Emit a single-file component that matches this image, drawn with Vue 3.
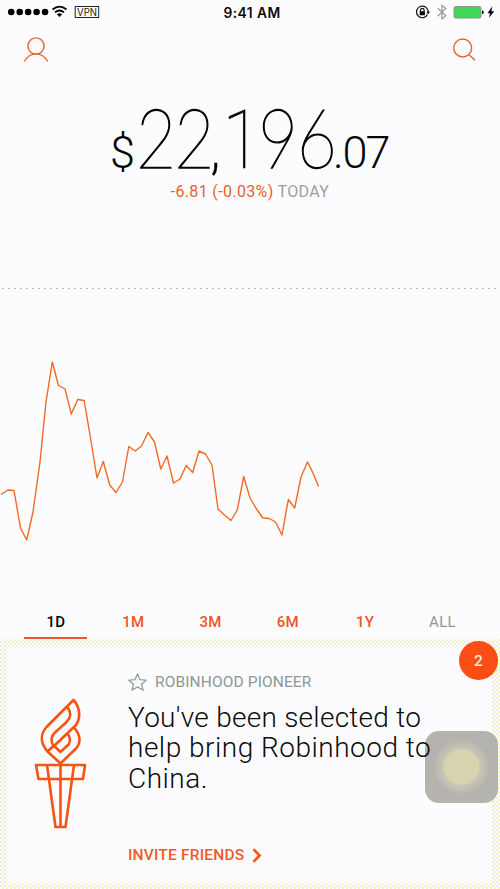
<script setup>
const ranges = ['1D', '1M', '3M', '6M', '1Y', 'ALL']
const points = [
  [1, 494.5], [8, 490], [14, 490.5], [20.5, 528], [26.7, 540], [33, 512], [40, 462], [46, 402],
  [52.3, 362], [58.5, 385.5], [65, 389], [71.3, 414], [77.7, 399.5], [84.2, 400.5], [90.5, 438], [97, 478],
  [103.3, 461.5], [109.7, 485], [116, 492.5], [122.5, 482], [128.8, 446.5], [135.2, 451], [141.5, 446],
  [148, 432.5], [154.5, 442], [160.8, 469], [167, 456], [173.5, 483], [180, 479], [186.2, 465.5],
  [192.7, 472.5], [199, 451], [205.5, 454], [212, 465], [218, 509], [224.5, 515], [231, 520.5],
  [237.3, 510], [243.7, 476.5], [250, 498], [256.5, 509], [262.8, 518], [269.3, 518.5], [275.5, 522],
  [282, 535], [288.3, 499.5], [294.7, 508], [301, 477], [307.5, 462], [313, 473], [318.5, 486.5],
]
const line = points.map((p) => p.join(',')).join(' ')
</script>

<template>
  <main class="screen">
    <div class="status">
      <div class="side">
        <svg width="104" height="25" viewBox="0 0 104 25">
          <circle v-for="n in 5" :key="n" :cx="2.8 + n * 8.45" cy="12" r="3.3" />
          <g fill="none" stroke="#000" stroke-width="1.8">
            <path d="M52.5 9.5Q59.5 3.8 66.5 9.5" />
            <path d="M55 12.4Q59.5 8.6 64 12.4" />
          </g>
          <path d="M56.8 14.2Q59.5 12.2 62.2 14.2L59.5 17z" />
          <rect x="75.2" y="6.5" width="23.5" height="11" fill="none" stroke="#222" stroke-width="1" />
          <text x="77" y="15.7" class="vpn" textLength="20" lengthAdjust="spacingAndGlyphs">VPN</text>
        </svg>
      </div>
      <div class="clock">9:41 AM</div>
      <div class="side end">
        <svg width="88" height="25" viewBox="412 0 88 25">
          <g fill="none" stroke="#111" stroke-width="1.2">
            <path d="M427.3 9A5.8 5.8 0 1 0 427.5 14.5" />
            <path d="M427.3 9Q428.4 10.5 428.4 12.4" />
            <path d="M420.5 11.5v-1.3a1.8 1.8 0 0 1 3.6 0v1.3" />
          </g>
          <path d="M426.3 11.7h3.6l-1.8 2.6zM419.7 11.2h5.2v4h-5.2z" />
          <path d="M437.7 8.2L445.8 15.8L441.9 19V5.3L445.8 8.5L437.7 16.2" fill="none" stroke="#9a9898" stroke-width="1.2" />
          <rect x="454" y="6.5" width="27" height="11.6" rx="1.6" fill="#43d75a" stroke="#8e9b85" stroke-width="1" />
          <path d="M482 10.3q1.8.3 1.8 2t-1.8 2z" />
          <path d="M492.3 6.3L487.5 13.2H490.1L489 17.8L494.2 11.2H491.4z" />
        </svg>
      </div>
    </div>

    <nav class="actions">
      <svg width="26" height="26" viewBox="23 36 26 26" class="stroke">
        <circle cx="36" cy="46" r="8.1" />
        <path d="M24.3 61.5C27.5 56.3 31.2 53.9 36 53.9S44.6 56.3 47.8 61.5" />
      </svg>
      <svg width="24" height="26" viewBox="452 36 24 26" class="stroke">
        <circle cx="462.7" cy="48" r="9" />
        <path d="M468.8 54.5L475 60.2" />
      </svg>
    </nav>

    <section class="value">
      <svg width="300" height="78" viewBox="100 102 300 78" class="price">
        <text x="110" y="168" class="cents" textLength="25" lengthAdjust="spacingAndGlyphs">$</text>
        <g transform="scale(.85 1)" class="big">
          <text y="168"><tspan x="160 205">22</tspan><tspan x="248" class="comma">,</tspan><tspan x="262" class="one">1</tspan><tspan x="303.5 349">96</tspan></text>
        </g>
        <text y="168" x="333 342.5 365.5" class="cents">.07</text>
      </svg>
      <p class="change"><b>-6.81 (-0.03%)</b> TODAY</p>
    </section>

    <section class="chart">
      <svg width="500" height="310" viewBox="0 280 500 310">
        <path d="M2 288.5H500" stroke="#aaa58c" stroke-width="1.2" stroke-dasharray="1.5 4.5" />
        <polyline :points="line" fill="none" stroke="#ef6a24" stroke-width="1.4" stroke-linejoin="round" />
      </svg>
    </section>

    <div class="tabs">
      <div v-for="(r, i) in ranges" :key="r" class="tab" :class="{ active: i === 0, muted: r === 'ALL' }">{{ r }}</div>
    </div>

    <section class="tray">
      <article class="card">
        <svg class="torch" width="54" height="132" viewBox="34 698 54 132">
          <path d="M60.5 763.5L47.5 751.5C41 744 39.5 735 46.5 727L73.5 700C80 707 81 718 76 725L53.5 746.5" />
          <path d="M67.5 707C71.5 713 71 718 66.5 722L54.5 733C51 736.5 51 741 53 745L60.5 752L68.5 744.5C71 741 70 737 67.5 733.5" />
          <path d="M47.5 751.5L54 745.5M73.5 727.5C80 733 81.5 742 76.5 748L60.5 763.5" />
          <path d="M36 765H85L83 779H38.5zM47 765L55.5 827H65.5L74 765M60.5 763V827" />
        </svg>
        <div class="body">
          <div class="label">
            <svg width="19" height="18" viewBox="0 0 19 18"><path d="M9.5 1L12 6.7L18.2 7.2L13.5 11.3L15 17L9.5 14L4 17L5.5 11.3L.8 7.2L7 6.7z" /></svg>
            <span>ROBINHOOD PIONEER</span>
          </div>
          <h2><span class="l1">You've been selected to</span><br><span class="l2">help bring Robinhood to</span><br><span class="l3">China.</span></h2>
          <div class="invite">
            <span>INVITE FRIENDS</span>
            <svg width="10" height="15" viewBox="0 0 10 15"><path d="M1.5 1.2L7.6 7.5L1.5 13.8" /></svg>
          </div>
        </div>
      </article>
      <div class="badge">2</div>
      <div class="assist"></div>
    </section>
  </main>
</template>

<style>
body { background: #fcfcfe; overflow: hidden; }
</style>

<style scoped>
.screen { width: 500px; height: 889px; overflow: hidden; background: #fcfcfe; font-family: Roboto, sans-serif; color: #0b0b0b; display: flex; flex-direction: column; }
svg { display: block; flex: none; }
.status { height: 25px; display: flex; align-items: center; }
.side { flex: 1; display: flex; }
.end { justify-content: flex-end; }
.clock { width: 66px; text-align: center; font: 600 13.8px/24px Inter, sans-serif; white-space: nowrap; letter-spacing: .45px; padding-left: 4px; }
.vpn { font: 10px Inter, sans-serif; fill: #222; }
.actions { height: 26px; padding: 11px 24px 0 23px; display: flex; justify-content: space-between; }
.stroke { fill: none; stroke: #ed5f30; stroke-width: 1.4; }
.value { height: 178px; padding-top: 40px; box-sizing: content-box; display: flex; flex-direction: column; align-items: center; }
.price { fill: #050505; overflow: visible; }
.big { font-family: Lato, sans-serif; font-size: 81.5px; font-weight: 100; stroke: #050505; stroke-width: 1.3px; }
.one { font-family: Roboto, sans-serif; stroke-width: .6px; }
.comma { font-family: Roboto, sans-serif; font-size: 56px; font-weight: 300; stroke-width: .3px; }
.cents { font-size: 45px; font-weight: 300; }
.change { margin: 2px 0 0; font-size: 16px; line-height: 20px; letter-spacing: .35px; color: #98a39b; white-space: nowrap; }
.change b { font-weight: 400; color: #ec5b2e; }
.chart { height: 325px; }
.tabs { height: 34px; padding: 0 19px 0 17px; display: grid; grid-template-columns: repeat(6, 77.3px); }
.tab { height: 32px; width: 63px; margin-left: 7px; line-height: 35px; text-align: center; font-size: 15px; font-weight: 500; letter-spacing: .3px; text-indent: 1px; color: #ec5528; border-bottom: 2px solid transparent; }
.active { color: #050505; border-color: #f0582a; }
.muted { color: #8b9a91; font-weight: 400; }
.tray { height: 250px; box-sizing: border-box; padding: 7px 8px 6px 7px; position: relative; background: conic-gradient(#f6f6bd 25%, #fcfcfe 0 50%, #e9e9f0 0 75%, #fcfcfe 0) 0 0 / 4px 4px; }
.card { height: 237px; background: #fcfcfe; border-radius: 3px; display: flex; }
.torch { margin: 52px 0 0 27px; fill: none; stroke: #f75312; stroke-width: 2.6; stroke-linejoin: round; }
.body { margin-left: 40px; padding-top: 25px; position: relative; z-index: 2; }
.label { height: 22px; display: flex; align-items: center; gap: 8px; color: #8b9992; font-size: 15.5px; letter-spacing: .12px; white-space: nowrap; }
.label path { fill: none; stroke: #8b9992; stroke-width: 1.2; }
h2 { margin: 10px 0 0; height: 91px; font-size: 28px; line-height: 30.3px; font-weight: 300; white-space: nowrap; }
.l1 { letter-spacing: .26px; }
.l2 { letter-spacing: .5px; }
.l3 { letter-spacing: .5px; }
.invite { margin-top: 51px; height: 20px; display: flex; align-items: center; gap: 8px; color: #f25a20; font-size: 15.5px; font-weight: 500; letter-spacing: .2px; white-space: nowrap; }
.invite path { fill: none; stroke: #f25a20; stroke-width: 2.7; }
.badge { position: absolute; left: 459px; top: 2px; width: 39px; height: 39px; border-radius: 50%; background: #fc4d14; color: #ffe9dd; text-align: center; font-size: 15.5px; line-height: 40px; font-weight: 500; }
.assist { position: absolute; left: 425px; top: 92px; width: 73px; height: 72px; border-radius: 14px; background: radial-gradient(circle, #d6d4ae 0 17px, #c6c5b4 19px, #bebcb2 24px, #b5b3ae 28px); }
</style>
